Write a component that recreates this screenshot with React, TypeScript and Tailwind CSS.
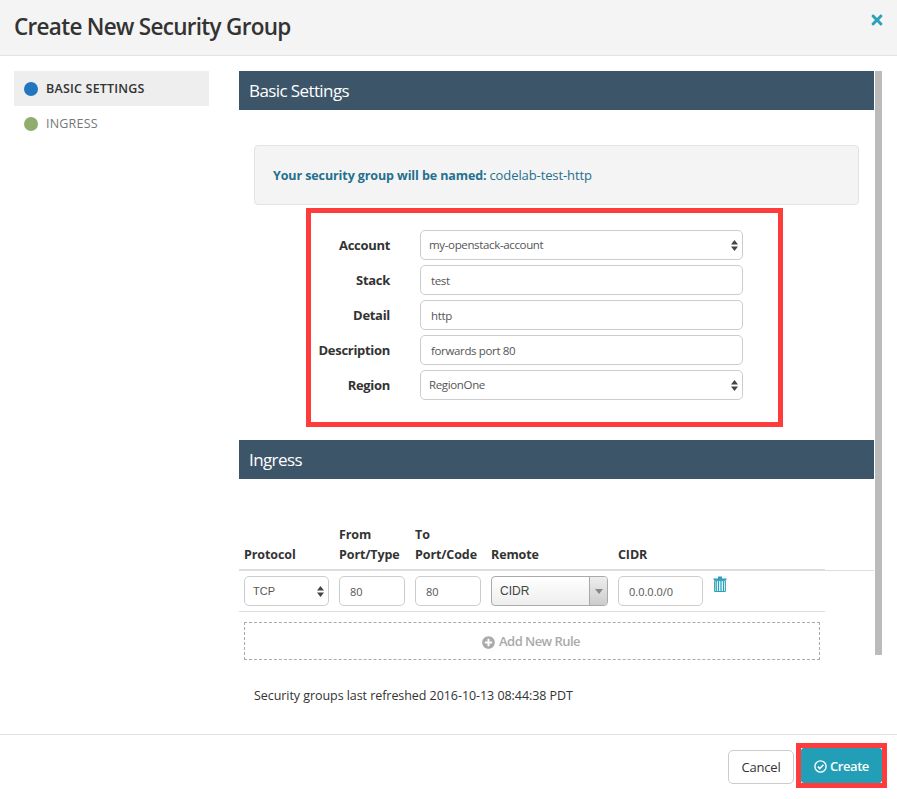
import { FaPlusCircle, FaTimes } from "react-icons/fa"

const font = { fontFamily: '"Open Sans", sans-serif' }

function SelectArrows() {
  return (
    <svg width="7" height="11" viewBox="0 0 7 11" className="shrink-0">
      <path d="M3.5 0L7 4.4H0z M3.5 11L0 6.6h7z" fill="#444" />
    </svg>
  )
}

function FormRow({ label, value, select }: { label: string; value: string; select?: boolean }) {
  return (
    <div className="flex items-center h-[30px]">
      <div className="w-[79px] pt-0.5 text-right text-[13px] font-bold text-[#333] tracking-[-0.3px]">{label}</div>
      <div className={`ml-[30px] w-[323px] h-[30px] bg-white border border-[#ccc] rounded-[5px] flex items-center justify-between text-[11.5px] text-[#555] tracking-[-0.35px] pr-1 ${select ? "pl-2" : "pl-[10px] pt-0.5"}`}>
        <span>{value}</span>
        {select && <SelectArrows />}
      </div>
    </div>
  )
}

function SectionHeader({ title }: { title: string }) {
  return (
    <div className="h-[39px] bg-[#3d5569] text-white text-[17px] flex items-center pl-[10px] tracking-[-0.6px]">{title}</div>
  )
}

function SmallInput({ value, className }: { value: string; className: string }) {
  return (
    <div className={`h-[30px] bg-white border border-[#ccc] rounded-[5px] flex items-center pl-2.5 pt-0.5 text-[11px] text-[#555] ${className}`}>
      {value}
    </div>
  )
}

function TrashIcon() {
  return (
    <svg width="14" height="16" viewBox="0 0 14 16" className="text-[#2ba0b8]">
      <path d="M0.5 2.5h13v1.6h-13z M5 0.5h4v2H5z" fill="currentColor" />
      <path d="M1.6 4.6h10.8v10.9H1.6z" fill="#ffffff" stroke="currentColor" />
      <path d="M3.2 5v10M5.5 5v10M8 5v10M10.5 5v10" stroke="currentColor" strokeWidth="1.3" />
    </svg>
  )
}

export default function App() {
  return (
    <div style={font} className="w-[897px] h-[799px] bg-white flex flex-col overflow-hidden">
      <div className="h-14 shrink-0 bg-[#f4f4f4] border-b border-[#e3e3e3] flex items-start justify-between pl-[14px] pr-[12px]">
        <h1 className="text-[22.5px] leading-[54px] font-semibold text-[#333] tracking-[-0.7px]">Create New Security Group</h1>
        <FaTimes className="text-[#2ba0b8] mt-3 text-[16px]" />
      </div>

      <div className="flex-1 flex items-start pt-[15px] pl-[14px]">
        <div className="w-[195px] shrink-0 text-[12.5px] tracking-[0.2px]">
          <div className="h-[35px] bg-[#eeeeee] flex items-center pl-[10px] gap-2 font-semibold text-[#333] pt-0.5">
            <span className="w-[14px] h-[14px] rounded-full bg-[#2276bf] -mt-0.5" />
            BASIC SETTINGS
          </div>
          <div className="h-[35px] flex items-center pl-[10px] gap-2 text-[#777] pt-0.5">
            <span className="w-[14px] h-[14px] rounded-full bg-[#8fae6d] -mt-0.5" />
            INGRESS
          </div>
        </div>

        <div className="ml-[30px] w-[635px] shrink-0">
          <SectionHeader title="Basic Settings" />

          <div className="ml-[15px] mt-[35px] w-[605px] h-[60px] bg-[#f4f4f4] border border-[#e3e3e3] rounded-[4px] flex items-center pl-[18px] pt-0.5 text-[12.5px] text-[#23708f] tracking-[-0.1px]">
            <span className="font-bold">Your security group will be named:</span>
            <span className="ml-[3px] text-[13px]">codelab-test-http</span>
          </div>

          <div className="ml-[67px] mt-[3px] w-[477px] h-[219px] border-[5px] border-[#ff3c3c] pt-[17px] flex flex-col gap-[5px]">
            <FormRow label="Account" value="my-openstack-account" select />
            <FormRow label="Stack" value="test" />
            <FormRow label="Detail" value="http" />
            <FormRow label="Description" value="forwards port 80" />
            <FormRow label="Region" value="RegionOne" select />
          </div>

          <div className="mt-[13px]">
            <SectionHeader title="Ingress" />
          </div>

          <div className="mt-[46px] border-b border-[#ddd]">
            <div className="w-[586px] border-b border-[#ddd] flex items-end pl-[5px] pb-[4px] text-[12.5px] font-bold text-[#333] leading-[20px] tracking-[-0.1px]">
              <div className="w-[95px]">Protocol</div>
              <div className="w-[76px]">From<br />Port/Type</div>
              <div className="w-[76px]">To<br />Port/Code</div>
              <div className="w-[127px]">Remote</div>
              <div>CIDR</div>
            </div>
          </div>

          <div className="w-[586px] border-b border-[#ddd] flex items-start pl-[5px] pt-[5px] pb-[5px] gap-[10px]">
            <div className="w-[85px] h-[30px] bg-white border border-[#ccc] rounded-[5px] flex items-center justify-between pl-2 pr-1 text-[11px] text-[#555]" style={{ fontFamily: '"Liberation Sans", sans-serif' }}>
              <span>TCP</span>
              <SelectArrows />
            </div>
            <SmallInput value="80" className="w-[66px]" />
            <SmallInput value="80" className="w-[66px]" />
            <div className="w-[117px] h-[30px] border border-[#aaa] rounded-[4px] bg-gradient-to-b from-white to-[#eeeeee] flex items-center justify-between text-[12px] text-[#444] overflow-hidden" style={{ fontFamily: '"Liberation Sans", sans-serif' }}>
              <span className="pl-2">CIDR</span>
              <div className="w-[18px] h-full border-l border-[#aaa] bg-gradient-to-b from-[#eeeeee] to-[#cccccc] flex items-center justify-center">
                <span className="w-0 h-0 border-x-[4px] border-x-transparent border-t-[5px] border-t-[#888]" />
              </div>
            </div>
            <SmallInput value="0.0.0.0/0" className="w-[85px]" />
            <div className="mt-0">
              <TrashIcon />
            </div>
          </div>

          <div className="ml-[5px] mt-[10px] w-[576px] h-[38px] pt-0.5 border border-dashed border-[#aaa] flex items-center justify-center gap-1 text-[13px] font-semibold text-[#aaa] tracking-[-0.55px]">
            <FaPlusCircle className="text-[13px] -ml-0.5" />
            Add New Rule
          </div>

          <div className="ml-[15px] mt-[27px] text-[12.5px] leading-[18px] text-[#333] tracking-[-0.06px]">Security groups last refreshed 2016-10-13 08:44:38 PDT</div>
        </div>

        <div className="ml-px w-[7px] h-[584px] shrink-0 bg-[#bbbbbb]" />
      </div>

      <div className="h-[65px] shrink-0 border-t border-[#e3e3e3] flex items-start justify-end pt-[8px] pr-[10px]">
        <button className="mt-[7px] mr-[2px] w-[66px] h-[34px] pt-0.5 bg-white border border-[#ccc] rounded-[5px] text-[13px] text-[#333] tracking-[-0.2px]">Cancel</button>
        <div className="border-[5px] border-[#ff3c3c] w-[91px] h-[45px]">
          <button className="w-full h-[35px] pt-0.5 bg-[#229fb6] rounded-[3px] text-white text-[13px] font-semibold flex items-center justify-center gap-[3px] tracking-[-0.45px]">
            <svg width="13" height="13" viewBox="0 0 13 13" fill="none" stroke="currentColor">
              <circle cx="6.5" cy="6.5" r="5.6" strokeWidth="1.4" />
              <path d="M3.8 6.6l2 2 3.6-3.8" strokeWidth="1.5" />
            </svg>
            Create
          </button>
        </div>
      </div>
    </div>
  )
}
